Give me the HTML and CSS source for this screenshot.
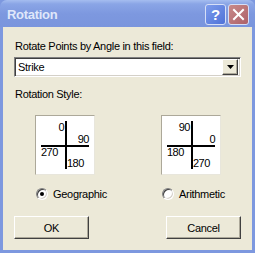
FILE: index.html
```html
<!DOCTYPE html>
<html>
<head>
<meta charset="utf-8">
<link rel="stylesheet" href="styles.css">
</head>
<body>
<div class="window">
  <div class="titlebar">
    <span class="title">Rotation</span>
    <div class="tb-buttons">
      <span class="tb-btn help">?</span>
      <span class="tb-btn close"><svg width="13" height="13" viewBox="0 0 13 13"><path d="M2 2 L11 11 M11 2 L2 11" stroke="#fff" stroke-width="2" stroke-linecap="square"/></svg></span>
    </div>
  </div>
  <div class="body">
    <div class="label">Rotate Points by Angle in this field:</div>
    <div class="combo">
      <span class="combo-text">Strike</span>
      <span class="combo-btn"><svg width="7" height="4" viewBox="0 0 7 4"><path d="M0 0 H7 L3.5 4 Z" fill="#000"/></svg></span>
    </div>
    <div class="label style-label">Rotation Style:</div>
    <div class="styles">
      <div class="col">
        <div class="diagram">
          <span class="q tl">0</span><span class="q tr">90</span><span class="q bl">270</span><span class="q br">180</span>
        </div>
        <div class="radio"><span class="radio-circle checked"></span><span>Geographic</span></div>
      </div>
      <div class="col">
        <div class="diagram">
          <span class="q tl">90</span><span class="q tr">0</span><span class="q bl">180</span><span class="q br">270</span>
        </div>
        <div class="radio"><span class="radio-circle"></span><span>Arithmetic</span></div>
      </div>
    </div>
    <div class="buttons">
      <div class="btn">OK</div>
      <div class="btn">Cancel</div>
    </div>
  </div>
</div>
</body>
</html>
```
FILE: styles.css
```css
html, body { margin: 0; padding: 0; background: #fff; }
.window {
  width: 255px; height: 253px; box-sizing: border-box;
  background: #7d98df;
  padding: 0 3px 3px 3px;
  display: flex; flex-direction: column;
  font-family: "Liberation Sans", Arial, sans-serif;
  font-size: 11px; color: #000; letter-spacing: -0.3px;
}
.titlebar {
  height: 27px; flex: none;
  margin: 0 -3px; padding: 0 6px 0 7px;
  background: linear-gradient(#a5bdf0 0px, #8aa5e6 4px, #7d98df 14px, #7a95dd 27px);
  display: flex; align-items: center; justify-content: space-between;
  border-radius: 7px 7px 0 0;
}
.title { color: #dfe7fa; font-weight: bold; font-size: 13px; letter-spacing: -0.3px; margin-top: 1px; }
.tb-buttons { display: flex; gap: 2px; margin-top: 1px; }
.tb-btn {
  width: 19px; height: 19px; border: 1px solid #d6dff7; border-radius: 3px;
  display: flex; align-items: center; justify-content: center;
  color: #fff; font-weight: bold; font-size: 15px; letter-spacing: 0;
}
.help { background: linear-gradient(135deg, #7d9cec, #4f72d8); }
.close { background: linear-gradient(135deg, #c88a8a, #ad6169); }
.body {
  flex: 1; background: #ece9d8;
  padding: 13px 11px 0 11px;
}
.label { line-height: 13px; padding-left: 1px; }
.combo {
  margin-top: 4px; height: 20px; box-sizing: border-box;
  background: #fff;
  border-top: 1px solid #808080; border-left: 1px solid #808080;
  border-right: 1px solid #fff; border-bottom: 1px solid #fff;
  box-shadow: inset 1px 1px 0 #404040, inset -1px -1px 0 #d4d0c8;
  display: flex; align-items: center; justify-content: space-between;
  padding: 2px;
}
.combo-text { padding-left: 1px; line-height: 14px; }
.combo-btn {
  width: 16px; height: 16px; box-sizing: border-box;
  background: #ece9d8;
  border-top: 1px solid #fff; border-left: 1px solid #fff;
  border-right: 1px solid #404040; border-bottom: 1px solid #404040;
  box-shadow: inset -1px -1px 0 #aca899;
  display: flex; align-items: center; justify-content: center;
}
.style-label { margin-top: 11px; }
.styles {
  margin-top: 14px;
  display: grid; grid-template-columns: 126px 1fr;
  padding-left: 21px;
}
.diagram {
  width: 60px; height: 60px; box-sizing: border-box;
  background: #fff;
  border-top: 1px solid #aca899; border-left: 1px solid #aca899;
  border-right: 1px solid #e8e6dc; border-bottom: 1px solid #e8e6dc;
  padding: 5px;
  display: grid; grid-template-columns: 24px 24px; grid-template-rows: 24px 24px;
  position: relative;
  line-height: 10px; letter-spacing: -0.5px;
}
.diagram::before {
  content: ""; position: absolute; left: 29px; top: 5px; width: 2px; height: 48px; background: #000;
}
.diagram::after {
  content: ""; position: absolute; left: 5px; top: 29px; width: 48px; height: 2px; background: #000;
}
.q { display: flex; }
.tl { justify-content: flex-end; align-items: flex-start; padding: 1px 1px 0 0; }
.tr { justify-content: flex-end; align-items: flex-end; padding: 0 0 1px 0; }
.bl { justify-content: flex-start; align-items: flex-start; padding: 2px 0 0 0; }
.br { justify-content: flex-start; align-items: flex-end; padding: 0 0 1px 2px; }
.radio {
  margin-top: 12px; margin-left: 1px;
  display: flex; align-items: center; gap: 5px; height: 13px;
}
.radio-circle {
  width: 12px; height: 12px; box-sizing: border-box; border-radius: 50%;
  background: #fff;
  border: 1px solid; border-color: #808080 #fff #fff #808080;
  box-shadow: inset 1px 1px 0 #404040, inset -1px -1px 0 #d4d0c8;
  position: relative;
}
.radio-circle.checked::after {
  content: ""; position: absolute; left: 3px; top: 3px; width: 4px; height: 4px; border-radius: 50%; background: #000;
}
.buttons {
  margin-top: 16px;
  display: flex; justify-content: space-between; padding-right: 0;
}
.btn {
  width: 75px; height: 23px; box-sizing: border-box;
  background: #ece9d8;
  border-top: 1px solid #fff; border-left: 1px solid #fff;
  border-right: 1px solid #404040; border-bottom: 1px solid #404040;
  box-shadow: inset -1px -1px 0 #aca899;
  display: flex; align-items: center; justify-content: center;
}
```
